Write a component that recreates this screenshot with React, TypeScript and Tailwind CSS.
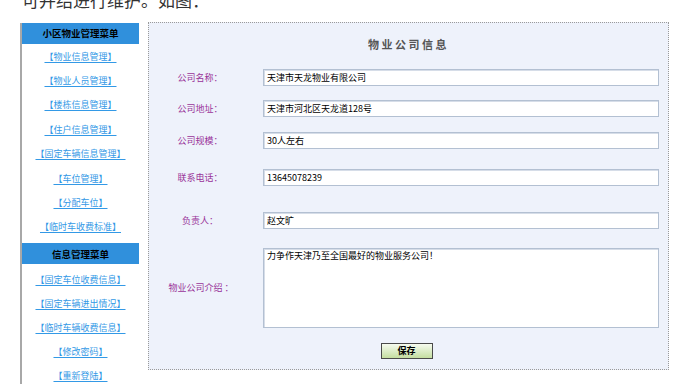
import React from "react";

const group1 = [
  "【物业信息管理】",
  "【物业人员管理】",
  "【楼栋信息管理】",
  "【住户信息管理】",
  "【固定车辆信息管理】",
  "【车位管理】",
  "【分配车位】",
  "【临时车收费标准】",
];

const group2 = [
  "【固定车位收费信息】",
  "【固定车辆进出情况】",
  "【临时车辆收费信息】",
  "【修改密码】",
  "【重新登陆】",
];

function Field({
  label,
  value,
  mt,
}: {
  label: string;
  value: string;
  mt: string;
}) {
  return (
    <div className={`flex items-center ${mt}`}>
      <div className="w-[102px] mr-[12px] text-center text-[9px] leading-[12px] text-[#993399]">
        {label}
      </div>
      <input
        readOnly
        defaultValue={value}
        className="w-[396px] h-[17px] bg-white border border-[#b3c0d2] shadow-[inset_1px_1px_0_#d6dde8] px-[3px] text-[9px] text-black outline-none"
      />
    </div>
  );
}

export default function App() {
  return (
    <div className="w-[693px] h-[384px] overflow-hidden bg-white flex flex-col font-['Noto_Sans_CJK_SC','Noto_Sans',sans-serif]">
      <p className="-mt-[9px] h-[17px] pl-[22px] text-[17px] leading-[17px] text-[#333] whitespace-nowrap">
        可并结进行维护。如图：
      </p>
      <div className="flex mt-[14px] pl-[20px]">
        {/* Sidebar */}
        <div className="w-[120px] mt-[1px] border-l-2 border-[#a8a8a8] flex flex-col h-[400px]">
          <div className="w-[117px] h-[21px] bg-[#3090dc] flex items-center justify-center text-[9.5px] font-bold text-black">
            小区物业管理菜单
          </div>
          {group1.map((t) => (
            <div
              key={t}
              className="w-[117px] h-[24.4px] flex items-center justify-center"
            >
              <span className="text-[9px] leading-[11px] text-[#3399e6] underline underline-offset-2">
                {t}
              </span>
            </div>
          ))}
          <div className="w-[117px] h-[21px] mt-[4px] bg-[#3090dc] flex items-center justify-center text-[9.5px] font-bold text-black">
            信息管理菜单
          </div>
          <div className="pt-[3px] flex flex-col">
            {group2.map((t) => (
              <div
                key={t}
                className="w-[117px] h-[24px] flex items-center justify-center"
              >
                <span className="text-[9px] leading-[11px] text-[#3399e6] underline underline-offset-2">
                  {t}
                </span>
              </div>
            ))}
          </div>
        </div>

        {/* Main panel */}
        <div className="ml-[8px] w-[521px] self-start border border-dotted border-[#9a9a9a] bg-[#eef2fb] pt-[13px] pb-[10px] flex flex-col">
          <div className="text-center text-[11px] leading-[16px] font-bold tracking-[2.5px] text-[#555]">
            物业公司信息
          </div>
          <Field label="公司名称：" value="天津市天龙物业有限公司" mt="mt-[17px]" />
          <Field label="公司地址：" value="天津市河北区天龙道128号" mt="mt-[14px]" />
          <Field label="公司规模：" value="30人左右" mt="mt-[15px]" />
          <Field label="联系电话：" value="13645078239" mt="mt-[20px]" />
          <Field label="负责人：" value="赵文旷" mt="mt-[26px]" />
          <div className="flex items-center mt-[19px]">
            <div className="w-[102px] mr-[12px] text-center text-[9px] leading-[12px] text-[#993399] pl-[2px]">
              物业公司介绍 ：
            </div>
            <textarea
              readOnly
              defaultValue="力争作天津乃至全国最好的物业服务公司！"
              className="w-[396px] h-[80px] bg-white border border-[#b3c0d2] shadow-[inset_1px_1px_0_#d6dde8] px-[3px] py-[1px] text-[9px] leading-[12px] text-black resize-none outline-none"
            />
          </div>
          <div className="flex justify-center mt-[15px] pr-[4px]">
            <button className="w-[52px] h-[16px] border border-[#4a4a4a] bg-linear-to-b from-[#f6fbef] to-[#c4dea0] text-[9px] leading-[12px] font-bold text-black">
              保存
            </button>
          </div>
        </div>
      </div>
    </div>
  );
}
